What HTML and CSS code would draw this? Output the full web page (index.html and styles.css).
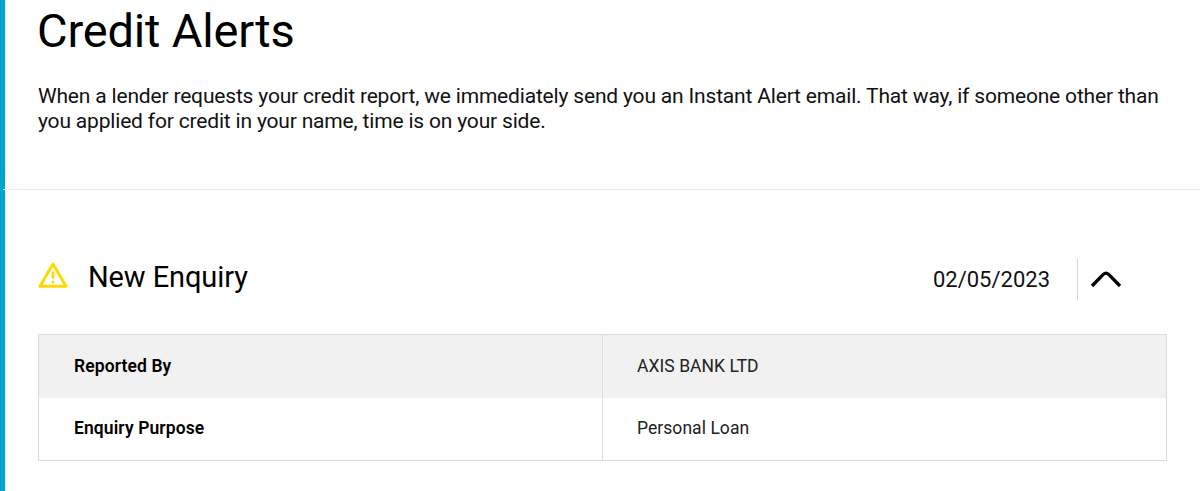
FILE: index.html
```
<!DOCTYPE html>
<html lang="en">
<head>
    <meta charset="UTF-8">
    <title>Credit Alerts</title>
    <link rel="stylesheet" href="styles.css">
</head>
<body>
    <div class="page">
        <div class="intro">
            <h1 class="title">Credit Alerts</h1>
            <p class="description">When a lender requests your credit report, we immediately send you an Instant Alert email. That way, if someone other than<br>you applied for credit in your name, time is on your side.</p>
        </div>
        <div class="alert">
            <div class="alert-header">
                <svg class="warning" width="30" height="26" viewBox="0 0 30 26">
                    <path d="M15 2 L28 24.3 H2 Z" fill="none" stroke="#ffd900" stroke-width="3" stroke-linejoin="round"/>
                    <path d="M15 10.8 V16" stroke="#ffd900" stroke-width="2.6" stroke-linecap="round"/>
                    <circle cx="15" cy="20" r="1.4" fill="#ffd900"/>
                </svg>
                <h2 class="alert-name">New Enquiry</h2>
                <span class="alert-date">02/05/2023</span>
                <button class="toggle" type="button" aria-label="Collapse">
                    <svg width="32" height="18" viewBox="0 0 32 18">
                        <path d="M2 16 L13.5 4.2 Q16 2 18.5 4.2 L30 16" fill="none" stroke="#000" stroke-width="3.3"/>
                    </svg>
                </button>
            </div>
            <table class="details">
                <tr>
                    <th>Reported By</th>
                    <td>AXIS BANK LTD</td>
                </tr>
                <tr>
                    <th>Enquiry Purpose</th>
                    <td>Personal Loan</td>
                </tr>
            </table>
        </div>
    </div>
</body>
</html>
```
FILE: styles.css
```
* {
    box-sizing: border-box;
}
body {
    font-family: Roboto, sans-serif;
    margin: 0;
    background-color: #fff;
    color: #000;
}
.page {
    height: 491px;
    border-left: 5px solid #00a5cc;
}
.intro {
    height: 190px;
    padding: 3px 33px 0 34px;
    margin-left: -2px;
    border-bottom: 1px solid #ebebeb;
}
.title {
    margin: 0;
    font-size: 47px;
    font-weight: 400;
    line-height: 56px;
    letter-spacing: -0.17px;
}
.description {
    margin: 25px 0 0;
    padding-left: 1px;
    font-size: 21px;
    line-height: 25px;
    letter-spacing: -0.178px;
    white-space: nowrap;
    color: #111;
}
.alert {
    padding: 69px 33px 0;
}
.alert-header {
    display: flex;
    height: 41px;
    margin-bottom: 34px;
}
.warning {
    margin-top: 3px;
}
.alert-name {
    margin: 0 0 0 20px;
    font-size: 29px;
    font-weight: 400;
    line-height: 36px;
    letter-spacing: -0.1px;
}
.alert-date {
    margin-left: auto;
    padding-right: 27px;
    font-size: 22px;
    line-height: 41px;
    color: #111;
}
.toggle {
    width: 90px;
    padding: 0 0 1px 12px;
    border: none;
    border-left: 1px solid #d6d6d6;
    background: none;
    text-align: left;
    cursor: pointer;
}
.toggle svg {
    display: block;
}
.details {
    width: 1129px;
    height: 127px;
    border: 1px solid #dcdcdc;
    border-collapse: collapse;
    table-layout: fixed;
    font-size: 17.5px;
}
.details th,
.details td {
    padding: 0 34px 1px;
    text-align: left;
}
.details th {
    padding-left: 35px;
    font-weight: 600;
    letter-spacing: 0.1px;
}
.details td {
    border-left: 1px solid #dcdcdc;
    color: #222;
    letter-spacing: 0.05px;
}
.details tr:first-child {
    background-color: #f1f1f1;
}
```
